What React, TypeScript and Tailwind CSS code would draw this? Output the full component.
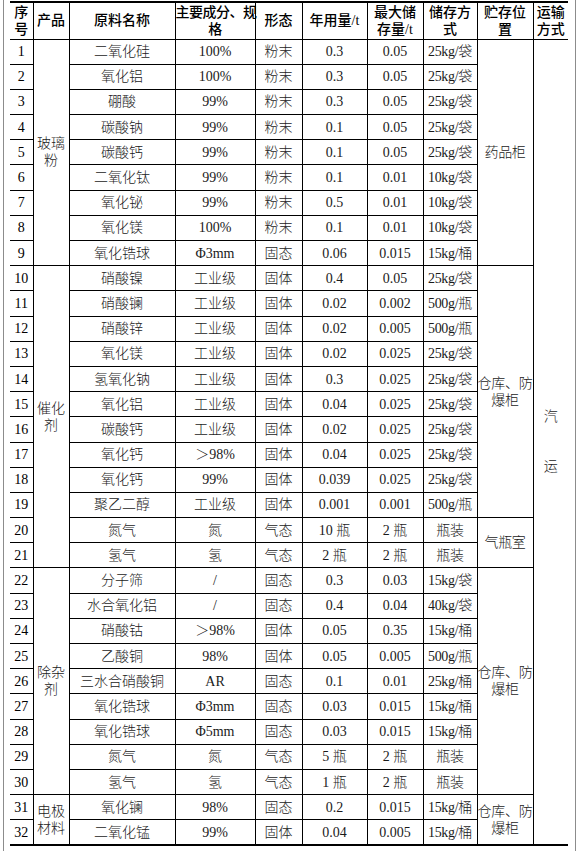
import React from "react";

type Row = [string, string, string, string, string, string, string];

const rows: Row[] = [
  ["1", "二氧化硅", "100%", "粉末", "0.3", "0.05", "25kg/袋"],
  ["2", "氧化铝", "100%", "粉末", "0.3", "0.05", "25kg/袋"],
  ["3", "硼酸", "99%", "粉末", "0.3", "0.05", "25kg/袋"],
  ["4", "碳酸钠", "99%", "粉末", "0.1", "0.05", "25kg/袋"],
  ["5", "碳酸钙", "99%", "粉末", "0.1", "0.05", "25kg/袋"],
  ["6", "二氧化钛", "99%", "粉末", "0.1", "0.01", "10kg/袋"],
  ["7", "氧化铋", "99%", "粉末", "0.5", "0.01", "10kg/袋"],
  ["8", "氧化镁", "100%", "粉末", "0.1", "0.01", "10kg/袋"],
  ["9", "氧化锆球", "Φ3mm", "固态", "0.06", "0.015", "15kg/桶"],
  ["10", "硝酸镍", "工业级", "固体", "0.4", "0.05", "25kg/袋"],
  ["11", "硝酸镧", "工业级", "固体", "0.02", "0.002", "500g/瓶"],
  ["12", "硝酸锌", "工业级", "固体", "0.02", "0.005", "500g/瓶"],
  ["13", "氧化镁", "工业级", "固体", "0.02", "0.025", "25kg/袋"],
  ["14", "氢氧化钠", "工业级", "固体", "0.3", "0.025", "25kg/袋"],
  ["15", "氧化铝", "工业级", "固体", "0.04", "0.025", "25kg/袋"],
  ["16", "碳酸钙", "工业级", "固体", "0.02", "0.025", "25kg/袋"],
  ["17", "氧化钙", "＞98%", "固体", "0.04", "0.025", "25kg/袋"],
  ["18", "氧化钙", "99%", "固体", "0.039", "0.025", "25kg/袋"],
  ["19", "聚乙二醇", "工业级", "固体", "0.001", "0.001", "500g/瓶"],
  ["20", "氮气", "氮", "气态", "10 瓶", "2 瓶", "瓶装"],
  ["21", "氢气", "氢", "气态", "2 瓶", "2 瓶", "瓶装"],
  ["22", "分子筛", "/", "固态", "0.3", "0.03", "15kg/袋"],
  ["23", "水合氧化铝", "/", "固态", "0.4", "0.04", "40kg/袋"],
  ["24", "硝酸钴", "＞98%", "固体", "0.05", "0.35", "15kg/桶"],
  ["25", "乙酸铜", "98%", "固体", "0.05", "0.005", "500g/瓶"],
  ["26", "三水合硝酸铜", "AR", "固态", "0.1", "0.01", "25kg/桶"],
  ["27", "氧化锆球", "Φ3mm", "固态", "0.03", "0.015", "15kg/桶"],
  ["28", "氧化锆球", "Φ5mm", "固态", "0.03", "0.015", "15kg/桶"],
  ["29", "氮气", "氮", "气态", "5 瓶", "2 瓶", "瓶装"],
  ["30", "氢气", "氢", "气态", "1 瓶", "2 瓶", "瓶装"],
  ["31", "氧化镧", "98%", "固态", "0.2", "0.015", "15kg/桶"],
  ["32", "二氧化锰", "99%", "固体", "0.04", "0.005", "15kg/桶"],
];

const products: Record<number, { top: string; bottom: string; span: number }> = {
  1: { top: "玻璃", bottom: "粉", span: 9 },
  10: { top: "催化", bottom: "剂", span: 12 },
  22: { top: "除杂", bottom: "剂", span: 9 },
  31: { top: "电极", bottom: "材料", span: 2 },
};

const places: Record<number, { lines: string[]; span: number }> = {
  1: { lines: ["药品柜"], span: 9 },
  10: { lines: ["仓库、防", "爆柜"], span: 10 },
  20: { lines: ["气瓶室"], span: 2 },
  22: { lines: ["仓库、防", "爆柜"], span: 9 },
  31: { lines: ["仓库、防", "爆柜"], span: 2 },
};

const td = "border border-black p-0 text-center align-middle whitespace-nowrap";
const th = "border border-black p-0 text-center align-middle whitespace-nowrap font-medium text-black";

export default function App() {
  return (
    <div
      className="w-[581px] h-[851px] bg-white overflow-hidden"
      style={{ fontFamily: '"Liberation Serif", "Noto Sans CJK SC", serif' }}
    >
      <div className="ml-[3px] w-[573px] h-[851px] border-x border-[#8c8c8c] pl-[6px] pt-[1px]">
        <table className="table-fixed border-collapse w-[558px] text-[14px] leading-[17px] text-[#1a1a1a]">
          <colgroup>
            <col className="w-[23px]" />
            <col className="w-[36px]" />
            <col className="w-[106px]" />
            <col className="w-[80px]" />
            <col className="w-[47px]" />
            <col className="w-[65px]" />
            <col className="w-[56px]" />
            <col className="w-[54px]" />
            <col className="w-[56px]" />
            <col className="w-[35px]" />
          </colgroup>
          <thead>
            <tr className="h-[37px] border-t-2 border-t-black">
              <th className={`${th} border-l-0`}>序<br />号</th>
              <th className={th}>产品</th>
              <th className={th}>原料名称</th>
              <th className={`${th} tracking-[-0.5px]`}>主要成分、规<br />格</th>
              <th className={th}>形态</th>
              <th className={th}>年用量/t</th>
              <th className={th}>最大储<br />存量/t</th>
              <th className={th}>储存方<br />式</th>
              <th className={th}>贮存位<br />置</th>
              <th className={`${th} border-r-0`}>运输<br />方式</th>
            </tr>
          </thead>
          <tbody className="border-b-2 border-b-black">
            {rows.map((r, i) => {
              const n = i + 1;
              const p = products[n];
              const loc = places[n];
              return (
                <tr key={n} className="h-[25.2px]">
                  <td className={`${td} border-l-0 text-black`}>{r[0]}</td>
                  {p && (
                    <td rowSpan={p.span} className={`${td} font-light`}>
                      {p.top}
                      <br />
                      {p.bottom}
                    </td>
                  )}
                  <td className={`${td} font-light`}>{r[1]}</td>
                  <td className={`${td} font-light`}>{r[2]}</td>
                  <td className={`${td} font-light`}>{r[3]}</td>
                  <td className={`${td} font-light`}>{r[4]}</td>
                  <td className={`${td} font-light`}>{r[5]}</td>
                  <td className={`${td} font-light tracking-[-0.3px]`}>{r[6]}</td>
                  {loc && (
                    <td rowSpan={loc.span} className={`${td} font-light tracking-[-0.3px]`}>
                      {loc.lines.map((l, k) => (
                        <div key={k}>{l}</div>
                      ))}
                    </td>
                  )}
                  {n === 1 && (
                    <td rowSpan={32} className={`${td} border-r-0 font-light`}>
                      <div className="flex flex-col items-center gap-[33px]">
                        <span>汽</span>
                        <span>运</span>
                      </div>
                    </td>
                  )}
                </tr>
              );
            })}
          </tbody>
        </table>
      </div>
    </div>
  );
}
